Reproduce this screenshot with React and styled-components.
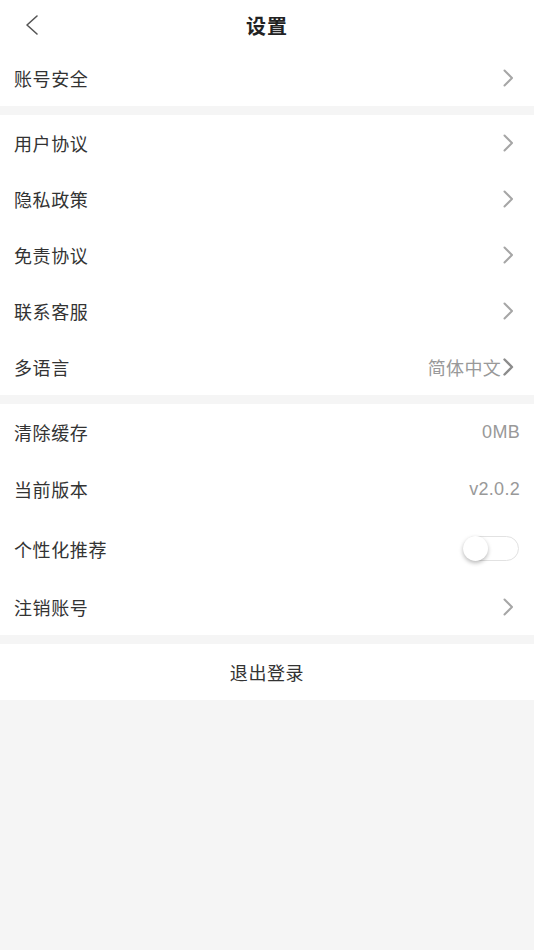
import React, { useState } from "react";
import styled, { createGlobalStyle } from "styled-components";

const GlobalStyle = createGlobalStyle`
  html, body {
    margin: 0;
    padding: 0;
    background: #f5f5f5;
  }
  body {
    font-family: "Noto Sans CJK SC", "Noto Sans", sans-serif;
    color: #333;
  }
`;

const Page = styled.div`
  width: 534px;
  min-height: 950px;
  background: #f5f5f5;
  display: flex;
  flex-direction: column;
`;

const Header = styled.div`
  height: 50px;
  background: #fff;
  display: grid;
  grid-template-columns: 60px 1fr 60px;
  align-items: center;
`;

const BackButton = styled.div`
  display: flex;
  align-items: center;
  padding-left: 24px;
  height: 100%;
`;

const Title = styled.h1`
  margin: 0;
  text-align: center;
  font-size: 20px;
  font-weight: 700;
  color: #222;
  letter-spacing: 1px;
`;

const Group = styled.div`
  background: #fff;
  margin-top: ${(p) => (p.$first ? "0" : "9px")};
  display: flex;
  flex-direction: column;
`;

const Row = styled.div`
  height: ${(p) => p.$h || 56}px;
  display: flex;
  align-items: center;
  justify-content: space-between;
  padding: 0 14px;
`;

const Label = styled.span`
  font-size: 18px;
  letter-spacing: 0.6px;
  color: #333;
`;

const Right = styled.div`
  display: flex;
  align-items: center;
  gap: 1px;
`;

const Value = styled.span`
  font-family: "Liberation Sans", "Noto Sans CJK SC", sans-serif;
  font-size: 18px;
  color: #999;
  letter-spacing: 0.3px;
`;

const Toggle = styled.div`
  width: 56px;
  height: 25px;
  border-radius: 13px;
  border: 1px solid #e2e2e2;
  background: #fff;
  box-sizing: border-box;
  position: relative;
  margin-right: 1px;
`;

const Knob = styled.div`
  position: absolute;
  top: -1px;
  left: ${(p) => (p.$on ? "31px" : "-1px")};
  width: 25px;
  height: 25px;
  border-radius: 50%;
  background: #fff;
  box-shadow: 0 2px 4px rgba(0, 0, 0, 0.28);
`;

const LogoutRow = styled.div`
  height: 56px;
  display: flex;
  align-items: center;
  justify-content: center;
  font-size: 18px;
  letter-spacing: 0.6px;
  color: #333;
`;

function Chevron({ dark }) {
  return (
    <svg width="12" height="18" viewBox="0 0 12 18" style={{ marginRight: 6 }}>
      <path
        d="M2.5 1.5 L10 9 L2.5 16.5"
        fill="none"
        stroke={dark ? "#8c8c8c" : "#a6a6a6"}
        strokeWidth={dark ? 2.4 : 2}
        strokeLinecap="round"
        strokeLinejoin="round"
      />
    </svg>
  );
}

function BackIcon() {
  return (
    <svg width="16" height="22" viewBox="0 0 16 22">
      <path
        d="M13 2 L3 11 L13 20"
        fill="none"
        stroke="#555"
        strokeWidth="1.6"
        strokeLinecap="round"
        strokeLinejoin="round"
      />
    </svg>
  );
}

export default function App() {
  const [recommend, setRecommend] = useState(false);

  return (
    <Page>
      <GlobalStyle />
      <Header>
        <BackButton>
          <BackIcon />
        </BackButton>
        <Title>设置</Title>
        <div />
      </Header>

      <Group $first>
        <Row>
          <Label>账号安全</Label>
          <Chevron />
        </Row>
      </Group>

      <Group>
        {["用户协议", "隐私政策", "免责协议", "联系客服"].map((t) => (
          <Row key={t}>
            <Label>{t}</Label>
            <Chevron />
          </Row>
        ))}
        <Row>
          <Label>多语言</Label>
          <Right>
            <Value>简体中文</Value>
            <Chevron dark />
          </Right>
        </Row>
      </Group>

      <Group>
        <Row $h={56}>
          <Label>清除缓存</Label>
          <Value>0MB</Value>
        </Row>
        <Row $h={58}>
          <Label>当前版本</Label>
          <Value>v2.0.2</Value>
        </Row>
        <Row $h={61}>
          <Label>个性化推荐</Label>
          <Toggle onClick={() => setRecommend(!recommend)}>
            <Knob $on={recommend} />
          </Toggle>
        </Row>
        <Row $h={56}>
          <Label>注销账号</Label>
          <Chevron />
        </Row>
      </Group>

      <Group>
        <LogoutRow>退出登录</LogoutRow>
      </Group>
    </Page>
  );
}
